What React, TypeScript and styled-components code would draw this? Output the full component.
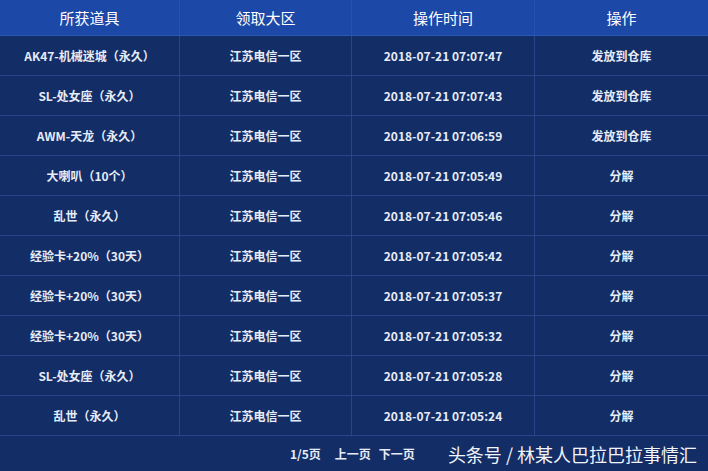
import React from "react";
import styled, { createGlobalStyle } from "styled-components";

const Global = createGlobalStyle`
  html, body { margin: 0; padding: 0; background: #132d66; }
  body { font-family: "Noto Sans CJK SC", "Noto Sans", sans-serif; }
`;

const Page = styled.div`
  width: 708px;
  height: 471px;
  background: #132d66;
  overflow: hidden;
  display: flex;
  flex-direction: column;
`;

const Grid = styled.div`
  display: grid;
  grid-template-columns: 180px 172px 183px 173px;
`;

const HeadCell = styled.div<{ $last?: boolean }>`
  height: 36px;
  background: #1c48a8;
  color: #ffffff;
  font-size: 15px;
  display: flex;
  align-items: center;
  justify-content: center;
  box-sizing: border-box;
  border-right: ${(p) => (p.$last ? "none" : "1px solid #2552b4")};
  border-bottom: 1px solid #2a58b8;
`;

const Cell = styled.div<{ $last?: boolean }>`
  height: 40px;
  color: #e6ecf7;
  font-size: 12px;
  font-weight: 600;
  display: flex;
  align-items: center;
  justify-content: center;
  box-sizing: border-box;
  border-right: ${(p) => (p.$last ? "none" : "1px solid #27468a")};
  border-bottom: 1px solid #27468a;
  white-space: nowrap;
`;

const Footer = styled.div`
  flex: 1;
  display: flex;
  align-items: center;
  justify-content: flex-end;
  padding-right: 11px;
  color: #e6ecf7;
`;

const Pager = styled.div`
  display: flex;
  gap: 8px;
  font-size: 12px;
  font-weight: 600;
  margin-right: 33px;
`;

const PagerItem = styled.span<{ $gap?: number }>`
  margin-right: ${(p) => p.$gap ?? 0}px;
`;

const Mark = styled.div`
  font-size: 18px;
  color: #f2f4fa;
  letter-spacing: 0;
`;

const rows: [string, string, string, string][] = [
  ["AK47-机械迷城（永久）", "江苏电信一区", "2018-07-21 07:07:47", "发放到仓库"],
  ["SL-处女座（永久）", "江苏电信一区", "2018-07-21 07:07:43", "发放到仓库"],
  ["AWM-天龙（永久）", "江苏电信一区", "2018-07-21 07:06:59", "发放到仓库"],
  ["大喇叭（10个）", "江苏电信一区", "2018-07-21 07:05:49", "分解"],
  ["乱世（永久）", "江苏电信一区", "2018-07-21 07:05:46", "分解"],
  ["经验卡+20%（30天）", "江苏电信一区", "2018-07-21 07:05:42", "分解"],
  ["经验卡+20%（30天）", "江苏电信一区", "2018-07-21 07:05:37", "分解"],
  ["经验卡+20%（30天）", "江苏电信一区", "2018-07-21 07:05:32", "分解"],
  ["SL-处女座（永久）", "江苏电信一区", "2018-07-21 07:05:28", "分解"],
  ["乱世（永久）", "江苏电信一区", "2018-07-21 07:05:24", "分解"],
];

const headers = ["所获道具", "领取大区", "操作时间", "操作"];

export default function App() {
  return (
    <Page>
      <Global />
      <Grid>
        {headers.map((h, i) => (
          <HeadCell key={h} $last={i === 3}>
            {h}
          </HeadCell>
        ))}
        {rows.map((r, ri) =>
          r.map((c, ci) => (
            <Cell key={`${ri}-${ci}`} $last={ci === 3}>
              {c}
            </Cell>
          ))
        )}
      </Grid>
      <Footer>
        <Pager>
          <PagerItem $gap={6}>1/5页</PagerItem>
          <PagerItem>上一页</PagerItem>
          <PagerItem>下一页</PagerItem>
        </Pager>
        <Mark>头条号 / 林某人巴拉巴拉事情汇</Mark>
      </Footer>
    </Page>
  );
}
